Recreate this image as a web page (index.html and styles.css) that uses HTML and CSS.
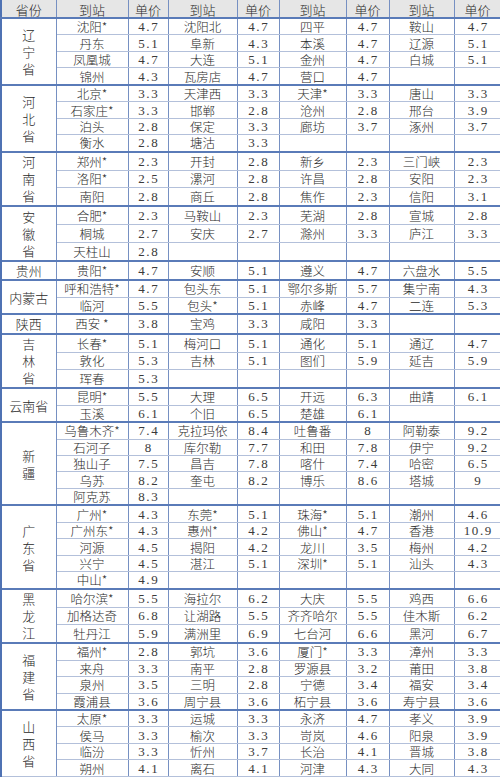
FILE: index.html
```html
<!DOCTYPE html>
<html lang="zh-CN">
<head>
<meta charset="utf-8">
<title>票价表</title>
<link rel="stylesheet" href="styles.css">
</head>
<body>
<table class="fare">
<colgroup>
<col class="c-prov"><col class="c-st1"><col class="c-pr1"><col class="c-st2"><col class="c-pr2"><col class="c-st3"><col class="c-pr3"><col class="c-st4"><col class="c-pr4">
</colgroup>
<thead>
<tr><th>省份</th><th>到站</th><th>单价</th><th>到站</th><th>单价</th><th>到站</th><th>单价</th><th>到站</th><th>单价</th></tr>
</thead>
<tbody>
<tr class="grp"><td class="prov" rowspan="4">辽<br>宁<br>省</td><td>沈阳*</td><td class="n">4.7</td><td>沈阳北</td><td class="n">4.7</td><td>四平</td><td class="n">4.7</td><td>鞍山</td><td class="n">4.7</td></tr>
<tr><td>丹东</td><td class="n">5.1</td><td>阜新</td><td class="n">4.3</td><td>本溪</td><td class="n">4.7</td><td>辽源</td><td class="n">5.1</td></tr>
<tr><td>凤凰城</td><td class="n">4.7</td><td>大连</td><td class="n">5.1</td><td>金州</td><td class="n">4.7</td><td>白城</td><td class="n">5.1</td></tr>
<tr><td>锦州</td><td class="n">4.3</td><td>瓦房店</td><td class="n">4.7</td><td>营口</td><td class="n">4.7</td><td></td><td></td></tr>

<tr class="grp"><td class="prov" rowspan="4">河<br>北<br>省</td><td>北京*</td><td class="n">3.3</td><td>天津西</td><td class="n">3.3</td><td>天津*</td><td class="n">3.3</td><td>唐山</td><td class="n">3.3</td></tr>
<tr><td>石家庄*</td><td class="n">3.3</td><td>邯郸</td><td class="n">2.8</td><td>沧州</td><td class="n">2.8</td><td>邢台</td><td class="n">3.9</td></tr>
<tr><td>泊头</td><td class="n">2.8</td><td>保定</td><td class="n">3.3</td><td>廊坊</td><td class="n">3.7</td><td>涿州</td><td class="n">3.7</td></tr>
<tr><td>衡水</td><td class="n">2.8</td><td>塘沽</td><td class="n">3.3</td><td></td><td></td><td></td><td></td></tr>

<tr class="grp"><td class="prov" rowspan="3">河<br>南<br>省</td><td>郑州*</td><td class="n">2.3</td><td>开封</td><td class="n">2.8</td><td>新乡</td><td class="n">2.3</td><td>三门峡</td><td class="n">2.3</td></tr>
<tr><td>洛阳*</td><td class="n">2.5</td><td>漯河</td><td class="n">2.8</td><td>许昌</td><td class="n">2.8</td><td>安阳</td><td class="n">2.3</td></tr>
<tr><td>南阳</td><td class="n">2.8</td><td>商丘</td><td class="n">2.8</td><td>焦作</td><td class="n">2.3</td><td>信阳</td><td class="n">3.1</td></tr>

<tr class="grp"><td class="prov" rowspan="3">安<br>徽<br>省</td><td>合肥*</td><td class="n">2.3</td><td>马鞍山</td><td class="n">2.3</td><td>芜湖</td><td class="n">2.8</td><td>宣城</td><td class="n">2.8</td></tr>
<tr><td>桐城</td><td class="n">2.7</td><td>安庆</td><td class="n">2.7</td><td>滁州</td><td class="n">3.3</td><td>庐江</td><td class="n">3.3</td></tr>
<tr><td>天柱山</td><td class="n">2.8</td><td></td><td></td><td></td><td></td><td></td><td></td></tr>

<tr class="grp"><td class="prov">贵州</td><td>贵阳*</td><td class="n">4.7</td><td>安顺</td><td class="n">5.1</td><td>遵义</td><td class="n">4.7</td><td>六盘水</td><td class="n">5.5</td></tr>

<tr class="grp"><td class="prov" rowspan="2">内蒙古</td><td>呼和浩特*</td><td class="n">4.7</td><td>包头东</td><td class="n">5.1</td><td>鄂尔多斯</td><td class="n">5.7</td><td>集宁南</td><td class="n">4.3</td></tr>
<tr><td>临河</td><td class="n">5.5</td><td>包头*</td><td class="n">5.1</td><td>赤峰</td><td class="n">4.7</td><td>二连</td><td class="n">5.3</td></tr>

<tr class="grp"><td class="prov">陕西</td><td>西安 *</td><td class="n">3.8</td><td>宝鸡</td><td class="n">3.3</td><td>咸阳</td><td class="n">3.3</td><td></td><td></td></tr>

<tr class="grp"><td class="prov" rowspan="3">吉<br>林<br>省</td><td>长春*</td><td class="n">5.1</td><td>梅河口</td><td class="n">5.1</td><td>通化</td><td class="n">5.1</td><td>通辽</td><td class="n">4.7</td></tr>
<tr><td>敦化</td><td class="n">5.3</td><td>吉林</td><td class="n">5.1</td><td>图们</td><td class="n">5.9</td><td>延吉</td><td class="n">5.9</td></tr>
<tr><td>珲春</td><td class="n">5.3</td><td></td><td></td><td></td><td></td><td></td><td></td></tr>

<tr class="grp"><td class="prov" rowspan="2">云南省</td><td>昆明*</td><td class="n">5.5</td><td>大理</td><td class="n">6.5</td><td>开远</td><td class="n">6.3</td><td>曲靖</td><td class="n">6.1</td></tr>
<tr><td>玉溪</td><td class="n">6.1</td><td>个旧</td><td class="n">6.5</td><td>楚雄</td><td class="n">6.1</td><td></td><td></td></tr>

<tr class="grp"><td class="prov" rowspan="5">新<br>疆</td><td>乌鲁木齐*</td><td class="n">7.4</td><td>克拉玛依</td><td class="n">8.4</td><td>吐鲁番</td><td class="n">8</td><td>阿勒泰</td><td class="n">9.2</td></tr>
<tr class="sub"><td>石河子</td><td class="n">8</td><td>库尔勒</td><td class="n">7.7</td><td>和田</td><td class="n">7.8</td><td>伊宁</td><td class="n">9.2</td></tr>
<tr><td>独山子</td><td class="n">7.5</td><td>昌吉</td><td class="n">7.8</td><td>喀什</td><td class="n">7.4</td><td>哈密</td><td class="n">6.5</td></tr>
<tr><td>乌苏</td><td class="n">8.2</td><td>奎屯</td><td class="n">8.2</td><td>博乐</td><td class="n">8.6</td><td>塔城</td><td class="n">9</td></tr>
<tr><td>阿克苏</td><td class="n">8.3</td><td></td><td></td><td></td><td></td><td></td><td></td></tr>

<tr class="grp"><td class="prov" rowspan="5">广<br>东<br>省</td><td>广州*</td><td class="n">4.3</td><td>东莞*</td><td class="n">5.1</td><td>珠海*</td><td class="n">5.1</td><td>潮州</td><td class="n">4.6</td></tr>
<tr><td>广州东*</td><td class="n">4.3</td><td>惠州*</td><td class="n">4.2</td><td>佛山*</td><td class="n">4.7</td><td>香港</td><td class="n">10.9</td></tr>
<tr><td>河源</td><td class="n">4.5</td><td>揭阳</td><td class="n">4.2</td><td>龙川</td><td class="n">3.5</td><td>梅州</td><td class="n">4.2</td></tr>
<tr><td>兴宁</td><td class="n">4.5</td><td>湛江</td><td class="n">5.1</td><td>深圳*</td><td class="n">5.1</td><td>汕头</td><td class="n">4.3</td></tr>
<tr><td>中山*</td><td class="n">4.9</td><td></td><td></td><td></td><td></td><td></td><td></td></tr>

<tr class="grp"><td class="prov" rowspan="3">黑<br>龙<br>江</td><td>哈尔滨*</td><td class="n">5.5</td><td>海拉尔</td><td class="n">6.2</td><td>大庆</td><td class="n">5.5</td><td>鸡西</td><td class="n">6.6</td></tr>
<tr><td>加格达奇</td><td class="n">6.8</td><td>让湖路</td><td class="n">5.5</td><td>齐齐哈尔</td><td class="n">5.5</td><td>佳木斯</td><td class="n">6.2</td></tr>
<tr><td>牡丹江</td><td class="n">5.9</td><td>满洲里</td><td class="n">6.9</td><td>七台河</td><td class="n">6.6</td><td>黑河</td><td class="n">6.7</td></tr>

<tr class="grp"><td class="prov" rowspan="4">福<br>建<br>省</td><td>福州*</td><td class="n">2.8</td><td>郭坑</td><td class="n">3.6</td><td>厦门*</td><td class="n">3.3</td><td>漳州</td><td class="n">3.3</td></tr>
<tr><td>来舟</td><td class="n">3.3</td><td>南平</td><td class="n">2.8</td><td>罗源县</td><td class="n">3.2</td><td>莆田</td><td class="n">3.8</td></tr>
<tr><td>泉州</td><td class="n">3.5</td><td>三明</td><td class="n">2.8</td><td>宁德</td><td class="n">3.4</td><td>福安</td><td class="n">3.4</td></tr>
<tr><td>霞浦县</td><td class="n">3.6</td><td>周宁县</td><td class="n">3.6</td><td>柘宁县</td><td class="n">3.6</td><td>寿宁县</td><td class="n">3.6</td></tr>

<tr class="grp"><td class="prov" rowspan="4">山<br>西<br>省</td><td>太原*</td><td class="n">3.3</td><td>运城</td><td class="n">3.3</td><td>永济</td><td class="n">4.7</td><td>孝义</td><td class="n">3.9</td></tr>
<tr><td>侯马</td><td class="n">3.3</td><td>榆次</td><td class="n">3.3</td><td>岢岚</td><td class="n">4.6</td><td>阳泉</td><td class="n">3.9</td></tr>
<tr><td>临汾</td><td class="n">3.3</td><td>忻州</td><td class="n">3.7</td><td>长治</td><td class="n">4.1</td><td>晋城</td><td class="n">3.8</td></tr>
<tr><td>朔州</td><td class="n">4.1</td><td>离石</td><td class="n">4.1</td><td>河津</td><td class="n">4.3</td><td>大同</td><td class="n">4.3</td></tr>
</tbody>
</table>
</body>
</html>
```

FILE: styles.css
```css
html, body {
  margin: 0;
  padding: 0;
  background: #ffffff;
}

.fare {
  width: 500px;
  height: 777px;
  table-layout: fixed;
  border-collapse: collapse;
  font-family: "Noto Sans CJK SC", "Noto Sans", sans-serif;
  font-size: 12.5px;
  font-weight: 300;
  color: #2a2a2a;
}

.c-prov { width: 55px; }
.c-st1 { width: 72px; }
.c-pr1 { width: 40px; }
.c-st2 { width: 69px; }
.c-pr2 { width: 42px; }
.c-st3 { width: 67px; }
.c-pr3 { width: 43px; }
.c-st4 { width: 65px; }
.c-pr4 { width: 47px; }

.fare th,
.fare td {
  padding: 0;
  line-height: 15px;
  text-align: center;
  vertical-align: middle;
  white-space: nowrap;
  border-left: 1px solid #7690c2;
  border-right: 1px solid #7690c2;
  border-top: 1px solid #b3c0da;
  border-bottom: 1px solid #b3c0da;
}

.fare th {
  font-size: 13px;
  font-weight: 300;
  background: #e6e6e6;
  padding-top: 2px;
  height: 15px;
  border-top: none;
  border-bottom: 2px solid #5a7bb8;
}

.fare th:first-child,
.fare td.prov {
  border-left: 2px solid #4f72b3;
}

.fare td.prov {
  font-size: 13px;
  line-height: 17px;
  white-space: normal;
}

.fare tr.grp td {
  border-top: 2px solid #5a7bb8;
}

.fare tr.sub td {
  border-top: 1px solid #6e8ac0;
}

.fare td.n {
  font-family: "Liberation Serif", "DejaVu Serif", serif;
  font-size: 13px;
  font-weight: 400;
  letter-spacing: 1.6px;
  padding-left: 1.6px;
  color: #3a3a3a;
}
```
